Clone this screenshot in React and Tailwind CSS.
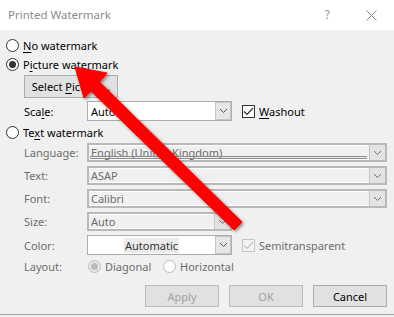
import React from "react";

function Radio({ checked, disabled }) {
  return (
    <span
      className={`w-[13px] h-[13px] rounded-full border flex items-center justify-center shrink-0 ${
        disabled ? "border-[#bcbcbc] " + (checked ? "bg-[#e8e8e8]" : "bg-white") : "border-[#333333] bg-white"
      }`}
    >
      {checked && (
        <span className={`w-[7px] h-[7px] rounded-full ${disabled ? "bg-[#bcbcbc]" : "bg-[#333333]"}`} />
      )}
    </span>
  );
}

function Check({ disabled }) {
  return (
    <span
      className={`w-[13px] h-[13px] border flex items-center justify-center shrink-0 ${
        disabled ? "border-[#c4c4c4] bg-[#f4f4f4]" : "border-[#333333] bg-white"
      }`}
    >
      <svg width="11" height="9" viewBox="0 0 11 9">
        <path d="M1 4.5 L4 7.5 L10 1" fill="none" stroke={disabled ? "#c4c4c4" : "#333333"} strokeWidth="1.2" />
      </svg>
    </span>
  );
}

function Chevron({ color = "#555555" }) {
  return (
    <svg width="9" height="6" viewBox="0 0 9 6">
      <path d="M1 1 L4.5 4.5 L8 1" fill="none" stroke={color} strokeWidth="1" />
    </svg>
  );
}

function ComboEnabled({ w, children, center }) {
  return (
    <div className={`${w} h-full flex border border-[#adadad] bg-white`}>
      <div className={`flex-1 flex items-center ${center ? "justify-center" : "pl-[3px]"} text-black`}>{children}</div>
      <div className="w-[16px] h-full flex items-center justify-center bg-[#e6e6e6] border-l border-[#c4c4c4] border-t border-b border-r">
        <Chevron />
      </div>
    </div>
  );
}

function ComboDisabled({ w, children, dbl }) {
  return (
    <div className={`${w} h-full flex border-2 border-[#b9b9b9] bg-[#f0f0f0]`}>
      <div
        className={`flex-1 relative flex pl-[2px] text-[#6d6d6d] border-t border-b border-white ${
          dbl ? "items-start pt-[1px]" : "items-center"
        }`}
      >
        <span>{children}</span>
        {dbl && (
          <div className="absolute left-[1px] right-[2px] bottom-0 flex flex-col gap-[1px]">
            <div className="h-px bg-[#8a8a8a]" />
            <div className="h-px bg-[#8a8a8a]" />
          </div>
        )}
      </div>
      <div className="w-[16px] h-full flex items-center justify-center bg-[#e3e3e3] border-l border-[#c4c4c4]">
        <Chevron color="#707070" />
      </div>
    </div>
  );
}

export default function App() {
  return (
    <div className="relative w-[394px] h-[317px] overflow-hidden bg-[#f0f0f0] font-['Noto_Sans',sans-serif] text-[11px] leading-none text-black">
      <div className="flex flex-col">
        {/* Title bar */}
        <div className="h-[30px] bg-white flex items-center pl-[8px] text-[#8c8c8c] text-[11.5px]">
          <span>Printed Watermark</span>
          <div className="ml-auto flex items-center gap-[36px] pr-[17px]">
            <span className="text-[#999999] text-[12px]">?</span>
            <svg width="11" height="11" viewBox="0 0 11 11">
              <path d="M0.5 0.5 L10.5 10.5 M10.5 0.5 L0.5 10.5" stroke="#8c8c8c" strokeWidth="1" />
            </svg>
          </div>
        </div>

        {/* No watermark */}
        <div className="mt-[6px] h-[18px] flex items-center pl-[6px] gap-[4px]">
          <Radio />
          <span>
            <span className="underline underline-offset-[1.5px]">N</span>o watermark
          </span>
        </div>

        {/* Picture watermark */}
        <div className="mt-[1px] h-[18px] flex items-center pl-[6px] gap-[4px]">
          <Radio checked />
          <span>
            P<span className="underline underline-offset-[1.5px]">i</span>cture watermark
          </span>
        </div>

        {/* Select Picture */}
        <div className="mt-[2px] ml-[24px] w-[94px] h-[23px] flex items-center justify-center bg-[#e1e1e1] border border-[#adadad]">
          <span>
            Select <span className="underline underline-offset-[1.5px]">P</span>icture...
          </span>
        </div>

        {/* Scale */}
        <div className="mt-[3px] h-[20px] flex items-center pl-[24px]">
          <span className="w-[63px]">
            Sca<span className="underline underline-offset-[1.5px]">l</span>e:
          </span>
          <ComboEnabled w="w-[145px]">Auto</ComboEnabled>
          <div className="ml-[10px] flex items-center gap-[4px]">
            <Check />
            <span>
              <span className="underline underline-offset-[1.5px]">W</span>ashout
            </span>
          </div>
        </div>

        {/* Text watermark */}
        <div className="mt-[2px] h-[18px] flex items-center pl-[6px] gap-[4px]">
          <Radio />
          <span>
            Te<span className="underline underline-offset-[1.5px]">x</span>t watermark
          </span>
        </div>

        {/* Language */}
        <div className="mt-[2px] h-[19px] flex items-center pl-[24px]">
          <span className="w-[63px] text-[#6d6d6d]">Language:</span>
          <ComboDisabled w="w-[300px]" dbl>
            English (United Kingdom)
          </ComboDisabled>
        </div>

        {/* Text */}
        <div className="mt-[4px] h-[19px] flex items-center pl-[24px]">
          <span className="w-[63px] text-[#6d6d6d]">Text:</span>
          <ComboDisabled w="w-[300px]">ASAP</ComboDisabled>
        </div>

        {/* Font */}
        <div className="mt-[4px] h-[19px] flex items-center pl-[24px]">
          <span className="w-[63px] text-[#6d6d6d]">Font:</span>
          <ComboDisabled w="w-[300px]">Calibri</ComboDisabled>
        </div>

        {/* Size */}
        <div className="mt-[4px] h-[19px] flex items-center pl-[24px]">
          <span className="w-[63px] text-[#6d6d6d]">Size:</span>
          <ComboDisabled w="w-[145px]">Auto</ComboDisabled>
        </div>

        {/* Color */}
        <div className="mt-[4px] h-[20px] flex items-center pl-[24px]">
          <span className="w-[63px] text-[#6d6d6d]">Color:</span>
          <ComboEnabled w="w-[145px]" center>
            <span className="bg-[#ebebeb] px-[1px] py-[2px] text-[#333333]">Automatic</span>
          </ComboEnabled>
          <div className="ml-[10px] flex items-center gap-[4px]">
            <Check disabled />
            <span className="text-[#6d6d6d]">Semitransparent</span>
          </div>
        </div>

        {/* Layout */}
        <div className="mt-[2px] h-[18px] flex items-center pl-[24px]">
          <span className="w-[64px] text-[#6d6d6d]">Layout:</span>
          <div className="w-[75px] flex items-center gap-[4px]">
            <Radio checked disabled />
            <span className="text-[#6d6d6d]">Diagonal</span>
          </div>
          <div className="flex items-center gap-[4px]">
            <Radio disabled />
            <span className="text-[#6d6d6d]">Horizontal</span>
          </div>
        </div>

        {/* Buttons */}
        <div className="mt-[10px] h-[22px] flex justify-end pr-[7px] gap-[10px]">
          <div className="w-[74px] h-full flex items-center justify-center bg-[#e1e1e1] border border-[#bcbcbc] text-[#a0a0a0]">
            Apply
          </div>
          <div className="w-[74px] h-full flex items-center justify-center bg-[#e1e1e1] border border-[#bcbcbc] text-[#a0a0a0]">
            OK
          </div>
          <div className="w-[74px] h-full flex items-center justify-center bg-[#e1e1e1] border border-[#adadad] text-black">
            Cancel
          </div>
        </div>

        <div className="mt-[7px] h-px bg-[#a0a0a0]" />
      </div>

      {/* Red arrow annotation */}
      <svg className="absolute inset-0 pointer-events-none" width="394" height="317" viewBox="0 0 394 317">
        <defs>
          <filter id="sh" x="-20%" y="-20%" width="140%" height="140%">
            <feDropShadow dx="1.5" dy="1.5" stdDeviation="1.5" floodColor="#000000" floodOpacity="0.45" />
          </filter>
        </defs>
        <polygon
          points="75,67 107,73 99.5,82 242,222 234,230 91,91 84,98"
          fill="#ff0000"
          stroke="#ff0000"
          strokeWidth="1"
          strokeLinejoin="round"
          filter="url(#sh)"
        />
      </svg>
    </div>
  );
}
